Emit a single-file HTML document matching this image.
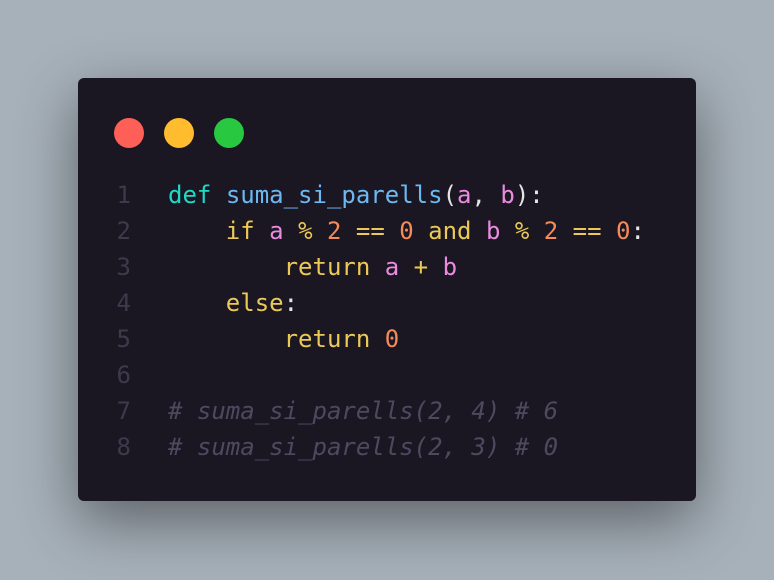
<!DOCTYPE html>
<html><head><style>
html,body{margin:0;padding:0}
body{width:774px;height:580px;background:#a7b1ba;position:relative;overflow:hidden}
.card{position:absolute;left:78px;top:78px;width:618px;height:423px;background:#1a1722;border-radius:6px;box-shadow:0 20px 60px rgba(0,0,0,.45)}
.dot{position:absolute;top:40px;width:30px;height:30px;border-radius:50%}
pre{position:absolute;left:0;top:99px;margin:0;font-family:"DejaVu Sans Mono","Liberation Mono",monospace;font-size:24px;line-height:36px;color:#e6e6e6}
.ln{display:inline-block;width:53px;text-align:right;color:#3d3b4b;margin-right:37px}
.k{color:#1ed9c6}.f{color:#6cb8f2}.y{color:#ecc957}.p{color:#ea8ae0}.n{color:#f58a5a}.c{color:#4d4a60;font-style:italic}.w{color:#e6e6e6}
</style></head><body>
<div class="card">
<div class="dot" style="left:36px;background:#fe5f57"></div>
<div class="dot" style="left:86px;background:#febc2e"></div>
<div class="dot" style="left:136px;background:#28c840"></div>
<pre><span class="ln">1</span><span class="k">def</span> <span class="f">suma_si_parells</span><span class="w">(</span><span class="p">a</span><span class="w">, </span><span class="p">b</span><span class="w">):</span>
<span class="ln">2</span>    <span class="y">if</span> <span class="p">a</span> <span class="y">%</span> <span class="n">2</span> <span class="y">==</span> <span class="n">0</span> <span class="y">and</span> <span class="p">b</span> <span class="y">%</span> <span class="n">2</span> <span class="y">==</span> <span class="n">0</span><span class="w">:</span>
<span class="ln">3</span>        <span class="y">return</span> <span class="p">a</span> <span class="y">+</span> <span class="p">b</span>
<span class="ln">4</span>    <span class="y">else</span><span class="w">:</span>
<span class="ln">5</span>        <span class="y">return</span> <span class="n">0</span>
<span class="ln">6</span>
<span class="ln">7</span><span class="c"># suma_si_parells(2, 4) # 6</span>
<span class="ln">8</span><span class="c"># suma_si_parells(2, 3) # 0</span></pre>
</div>
</body></html>
